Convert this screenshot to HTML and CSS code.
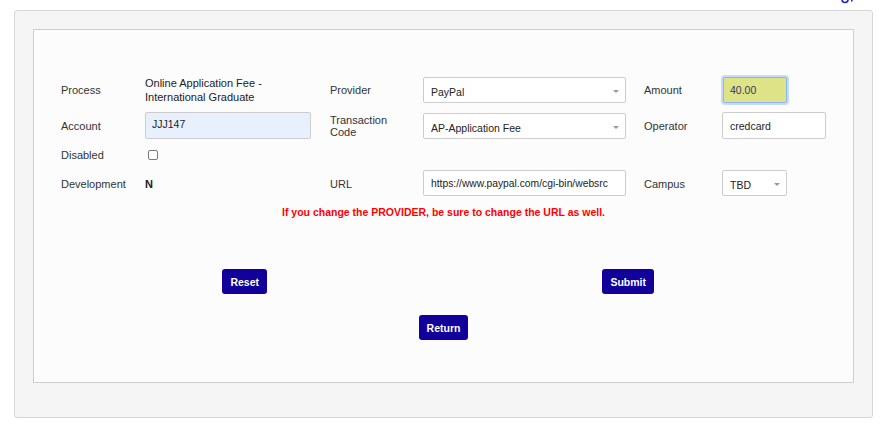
FILE: index.html
```html
<!DOCTYPE html>
<html>
<head>
<meta charset="utf-8">
<link rel="stylesheet" href="styles.css">
</head>
<body>
<svg class="corner-icon" width="16" height="10" viewBox="0 0 16 10"><circle cx="5" cy="0.5" r="3" fill="none" stroke="#2222cc" stroke-width="1.6"/><rect x="11" y="0" width="1.6" height="2.5" fill="#2222cc"/></svg>
<div class="panel">
  <div class="card">
    <form class="fields">
      <div class="cell h27"><span class="label">Process</span></div>
      <div class="cell h27"><span class="value two">Online Application Fee -<br>International Graduate</span></div>
      <div class="cell h27"><span class="label">Provider</span></div>
      <div class="cell h27"><div class="sel w203"><select><option>PayPal</option></select></div></div>
      <div class="cell h27"><span class="label">Amount</span></div>
      <div class="cell h27"><input class="inp amount" value="40.00"></div>

      <div class="cell h27"><span class="label">Account</span></div>
      <div class="cell h27"><input class="inp account" value="JJJ147"></div>
      <div class="cell h27"><span class="label two">Transaction<br>Code</span></div>
      <div class="cell h27"><div class="sel w203"><select><option>AP-Application Fee</option></select></div></div>
      <div class="cell h27"><span class="label">Operator</span></div>
      <div class="cell h27"><input class="inp operator" value="credcard"></div>

      <div class="cell h19"><span class="label">Disabled</span></div>
      <div class="cell h19"><input type="checkbox" class="chk"></div>
      <div class="cell h19"></div>
      <div class="cell h19"></div>
      <div class="cell h19"></div>
      <div class="cell h19"></div>

      <div class="cell h26"><span class="label">Development</span></div>
      <div class="cell h26"><span class="value bold">N</span></div>
      <div class="cell h26"><span class="label">URL</span></div>
      <div class="cell h26"><input class="inp url" value="https://www.paypal.com/cgi-bin/websrc"></div>
      <div class="cell h26"><span class="label">Campus</span></div>
      <div class="cell h26"><div class="sel w65"><select><option>TBD</option></select></div></div>
    </form>
    <p class="warning">If you change the PROVIDER, be sure to change the URL as well.</p>
    <div class="actions">
      <button class="btn">Reset</button>
      <button class="btn">Submit</button>
    </div>
    <div class="return-row">
      <button class="btn">Return</button>
    </div>
  </div>
</div>
</body>
</html>
```

FILE: styles.css
```css
html, body {
  margin: 0;
  padding: 0;
  background: #ffffff;
  font-family: "Liberation Sans", Arial, sans-serif;
  font-size: 11px;
  color: #333333;
}

.corner-icon {
  position: absolute;
  top: -1px;
  left: 840px;
}

.panel {
  margin: 10px 0 0 14px;
  width: 859px;
  height: 408px;
  background: #f5f5f5;
  border: 1px solid #d6d6d6;
  border-radius: 3px;
  padding: 18px 0 0 18px;
  box-sizing: border-box;
}

.card {
  width: 821px;
  height: 354px;
  box-sizing: border-box;
  background: #fcfcfc;
  border: 1px solid #cfcfcf;
  padding-top: 46px;
}

.fields {
  display: grid;
  grid-template-columns: 84px 185px 93px 221px 78px 1fr;
  grid-template-rows: 36px 33px 25px 26px;
  padding-left: 27px;
  margin: 0;
}

.cell {
  display: flex;
  align-items: center;
  align-self: start;
}
.h27 { height: 27px; }
.h26 { height: 26px; }
.h19 { height: 19px; }

.label {
  color: #333333;
  line-height: 12px;
  padding-top: 1px;
}
.value {
  color: #222222;
  line-height: 14px;
}
.bold { font-weight: bold; padding-top: 1px; }

.inp {
  font-family: "Liberation Sans", Arial, sans-serif;
  font-size: 10.5px;
  color: #222222;
  height: 26px;
  box-sizing: border-box;
  border: 1px solid #cccccc;
  border-radius: 2px;
  background: #ffffff;
  padding: 0 7px;
  margin: 0;
  outline: none;
}
.account {
  width: 166px;
  height: 27px;
  background: #e8f0fe;
  padding-left: 6px;
  padding-bottom: 3px;
}
.amount {
  width: 64px;
  height: 26px;
  margin-left: 1px;
  background: #dfe388;
  border-color: #8ab4f8;
  box-shadow: 0 0 0 2px rgba(138, 180, 248, 0.45);
  color: #333366;
  padding-left: 6px;
}
.operator {
  width: 104px;
  height: 27px;
}
.url {
  width: 203px;
  font-size: 10.3px;
}

.sel {
  position: relative;
  height: 26px;
}
.sel select {
  appearance: none;
  -webkit-appearance: none;
  width: 100%;
  height: 100%;
  box-sizing: border-box;
  border: 1px solid #cccccc;
  border-radius: 2px;
  background: #ffffff;
  font-family: "Liberation Sans", Arial, sans-serif;
  font-size: 10.5px;
  color: #222222;
  padding: 4px 0 0 7px;
  margin: 0;
  outline: none;
}
.sel::after {
  content: "";
  position: absolute;
  right: 7px;
  top: 13px;
  border-left: 3px solid transparent;
  border-right: 3px solid transparent;
  border-top: 3px solid #999999;
}
.w203 { width: 203px; }
.w65 { width: 65px; }

.chk {
  appearance: none;
  -webkit-appearance: none;
  width: 10px;
  height: 10px;
  border: 1px solid #7a7a7a;
  border-radius: 2px;
  background: #ffffff;
  margin: 1px 0 0 3px;
  box-sizing: border-box;
}

.warning {
  margin: 9px 0 0 0;
  text-align: center;
  color: #ff0000;
  font-weight: bold;
  font-size: 10.5px;
  line-height: 14px;
}

.actions {
  display: grid;
  grid-template-columns: 1fr 1fr;
  justify-items: center;
  margin: 50px 33px 0 19px;
}

.return-row {
  display: flex;
  justify-content: center;
  margin-top: 21px;
}

.btn {
  background: #11009a;
  color: #ffffff;
  border: none;
  border-radius: 3px;
  height: 25px;
  padding: 0 8px;
  font-family: "Liberation Sans", Arial, sans-serif;
  font-size: 10.5px;
  font-weight: bold;
  cursor: pointer;
}
```
